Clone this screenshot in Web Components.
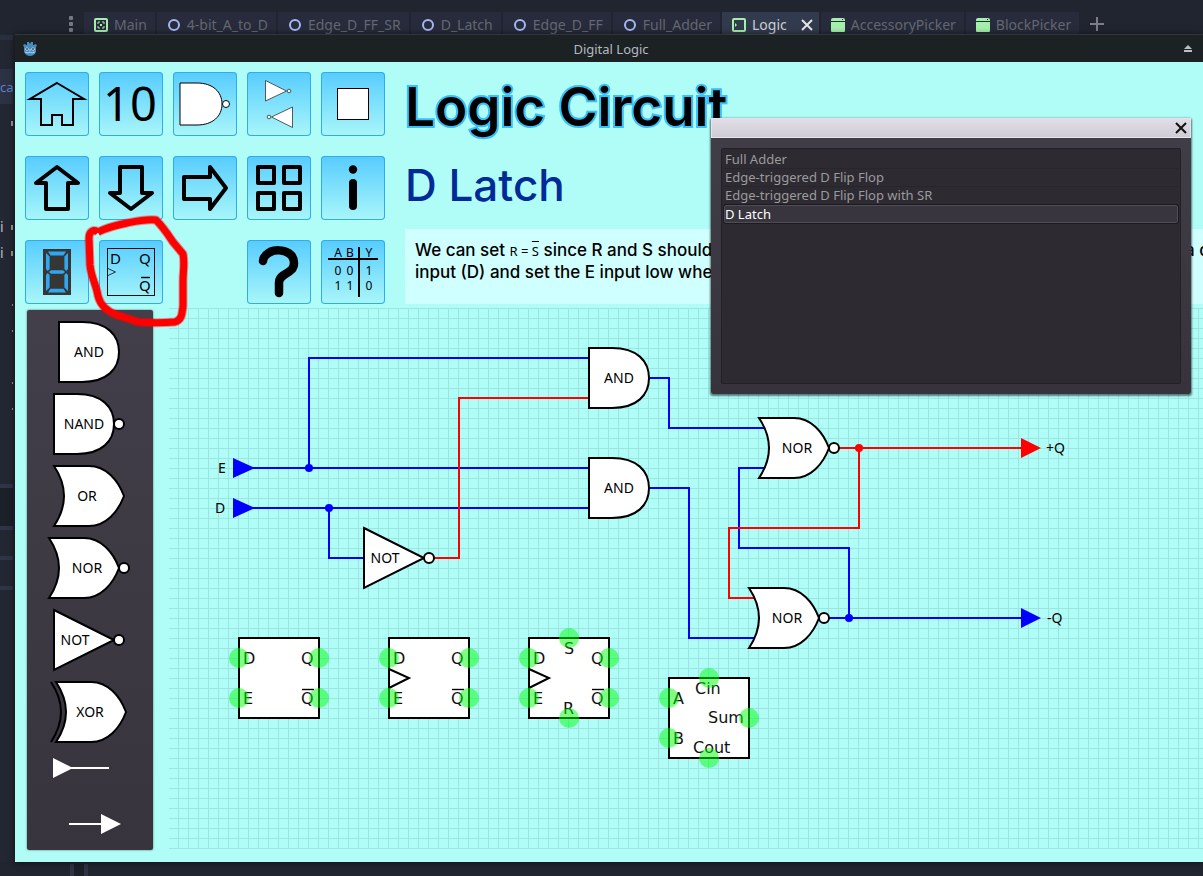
<!DOCTYPE html>
<html lang="en">
<head>
<meta charset="utf-8">
<title>Digital Logic</title>
<style>
  html, body { margin: 0; }
  body { font-family: "Noto Sans", sans-serif; font-size: 14px; background: #212530; overflow: hidden; }
</style>
</head>
<body>
<editor-desktop>
  <editor-tabs slot="tabs">
    <editor-tab kind="grid">Main</editor-tab>
    <editor-tab kind="ring">4-bit_A_to_D</editor-tab>
    <editor-tab kind="ring">Edge_D_FF_SR</editor-tab>
    <editor-tab kind="ring">D_Latch</editor-tab>
    <editor-tab kind="ring">Edge_D_FF</editor-tab>
    <editor-tab kind="ring">Full_Adder</editor-tab>
    <editor-tab kind="panel" active>Logic</editor-tab>
    <editor-tab kind="popup">AccessoryPicker</editor-tab>
    <editor-tab kind="popup">BlockPicker</editor-tab>
  </editor-tabs>
  <editor-sidebar slot="side"></editor-sidebar>
  <app-window slot="window" caption="Digital Logic">
    <tool-bar slot="tools"></tool-bar>
    <circuit-info slot="info"></circuit-info>
    <gate-palette slot="palette"></gate-palette>
    <circuit-canvas slot="canvas"></circuit-canvas>
    <block-dialog slot="dialog"></block-dialog>
  </app-window>
</editor-desktop>

<script>
const define = (name, render) => customElements.define(name, class extends HTMLElement {
  connectedCallback() {
    if (this.shadowRoot) return;
    this.attachShadow({ mode: 'open' }).innerHTML = render(this);
  }
});

define('editor-desktop', () => `
  <style>
    :host { display: grid; grid-template-columns: 15px 1fr; grid-template-rows: 35px 1fr 14px; min-height: 100vh; background: #232733; }
    .tabs { grid-column: 1 / -1; min-width: 0; background: #212530; }
    .side, .main { min-width: 0; }
    .main { z-index: 1; display: grid; box-shadow: 0 0 7px rgba(0,0,0,.65); }
    .foot { grid-column: 1 / -1; display: flex; justify-content: flex-start; padding: 2px 0 0 70px; background: #212530; }
    .split { width: 10px; border: solid #2f3546; border-width: 0 4px; background: #1c2029; }
  </style>
  <div class="tabs"><slot name="tabs"></slot></div>
  <div class="side"><slot name="side"></slot></div>
  <div class="main"><slot name="window"></slot></div>
  <div class="foot"><div class="split"></div></div>`);

define('editor-tabs', () => `
  <style>
    :host { display: flex; align-items: flex-start; gap: 2px; padding: 12px 0 0 60px; }
    button { border: 0; background: none; padding: 0; height: 23px; }
    .menu { width: 22px; }
    .add { width: 32px; }
    svg { display: block; margin: 0 auto; }
  </style>
  <button class="menu" aria-label="Tab list"><svg width="4" height="18" fill="#757982"><rect y="1" width="4" height="4" rx="1"/><rect y="7" width="4" height="4" rx="1"/><rect y="13" width="4" height="4" rx="1"/></svg></button>
  <slot></slot>
  <button class="add" aria-label="New tab"><svg width="14" height="14" stroke="#7b7e86" stroke-width="2"><path d="M7 0V14M0 7H14"/></svg></button>`);

const tabIcons = {
  grid: '<rect x="1" y="1" width="12" height="12" rx="1" fill="none" stroke="#a5efac" stroke-width="2"/><path d="M4 6V4H6M8 4H10V6M10 8V10H8M6 10H4V8" fill="none" stroke="#a5efac"/><rect x="6" y="6" width="2" height="2" fill="#a5efac"/>',
  ring: '<circle cx="7" cy="7" r="5" fill="none" stroke="#a5b7f3" stroke-width="2"/>',
  panel: '<rect x="1" y="1" width="12" height="12" rx="1" fill="none" stroke="#a5efac" stroke-width="2"/><path d="M3 5L5 7L3 9Z" fill="#a5efac"/>',
  popup: '<path d="M0 2Q0 0 2 0H12Q14 0 14 2V3H0ZM0 4H14V13Q14 14 13 14H1Q0 14 0 13Z" fill="#a5efac"/><rect x="11" y="1" width="1" height="1" fill="#212530"/>'
};
define('editor-tab', el => `
  <style>
    :host { display: block; flex: none; }
    .tab { display: flex; align-items: center; height: 23px; padding: 2px 8px 0 10px; box-sizing: border-box; background: #272b3b; }
    :host([active]) .tab { background: #323a4d; padding-right: 6px; }
    button { display: flex; align-items: center; gap: 6px; border: 0; padding: 0; background: none; font: 14px/20px "Noto Sans", sans-serif; color: #646772; white-space: nowrap; }
    :host([active]) button { color: #cdd0d6; }
    :host([active]) .close { margin-left: 14px; }
  </style>
  <div class="tab"><button><svg width="14" height="14">${tabIcons[el.getAttribute('kind')]}</svg><span><slot></slot></span></button>
  ${el.hasAttribute('active') ? '<button class="close" aria-label="Close tab"><svg width="12" height="12" stroke="#e3e5e9" stroke-width="2"><path d="M1 1L11 11M11 1L1 11"/></svg></button>' : ''}</div>`);

define('editor-sidebar', () => {
  const rows = ['m', '', '', '', 'im', 'im', '', 's', 's', '', 's', 's'];
  return `
  <style>
    :host { display: flex; flex-direction: column; width: 13px; background: #232733; }
    .head { height: 34px; border-top: 5px solid #2a2f3f; box-sizing: border-box; }
    .sel { height: 35px; background: #2c3244; color: #5c82c6; font-size: 13px; line-height: 36px; }
    .gap { height: 6px; }
    .row { height: 26px; display: flex; justify-content: space-between; align-items: center; color: #b9babd; line-height: 26px; }
    .row i { font-style: normal; }
    .row b { margin-left: auto; width: 2px; height: 5px; background: #9a9b9f; }
    .row b.s { height: 2px; width: 1px; }
    .band { border-top: 4px solid #2f3546; }
  </style>
  <div class="head"></div><div class="sel">ca</div><div class="gap"></div>
  ${rows.map(r => `<div class="row">${r[0] === 'i' ? '<i>i</i>' : ''}${r ? `<b class="${r === 's' ? 's' : ''}"></b>` : ''}</div>`).join('')}
  <div style="height:62px"></div>
  <div class="band" style="height:38px;background:#1c2029"></div>
  <div class="band" style="height:26px"></div>
  <div class="band" style="height:26px"></div>
  <div class="band"></div>`;
});

define('app-window', el => `
  <style>
    :host { display: flex; flex-direction: column; position: relative; min-width: 0; background: #b0fdf8; }
    header { display: flex; align-items: center; height: 27px; padding: 0 11px 0 7px; box-sizing: border-box; background: #1c2224; color: #b4b9c0; box-shadow: 0 -1px #333638; }
    header h1 { flex: 1; margin: 0; text-align: center; font: 13px/26px "Noto Sans", sans-serif; }
    header button { border: 0; padding: 0; background: none; line-height: 0; }
    .top { display: flex; gap: 20px; padding: 10px 0 0 10px; }
    .info { flex: 1; min-width: 0; display: grid; }
    .work { flex: 1; display: flex; gap: 16px; padding: 4px 0 12px 12px; align-items: flex-start; }
    .palette { padding-top: 2px; flex: none; }
    .canvas { flex: 1; min-width: 0; }
    .dialog { position: absolute; right: 12px; top: 83px; z-index: 3; }
  </style>
  <header>
    <svg width="16" height="16"><path d="M1 4L3 3L4 4L5 4L5 1L7 1L8 3L9 1L11 1L11 4L12 4L13 3L15 4L14 6V11Q12 15 8 15Q4 15 2 11V6Z" fill="#478cbf"/><circle cx="5" cy="8" r="1.6" fill="#fff"/><circle cx="11" cy="8" r="1.6" fill="#fff"/><circle cx="5" cy="8" r="1" fill="#414042"/><circle cx="11" cy="8" r="1" fill="#414042"/><path d="M8 8V10M3 11L6 12L8 11L10 12L13 11" fill="none" stroke="#b5d1e6"/></svg>
    <h1>${el.getAttribute('caption')}</h1>
    <button aria-label="Shade window"><svg width="8" height="8" fill="#b9c0c5"><path d="M4 0L8 4H0ZM0 5H8V7H0Z"/></svg></button>
  </header>
  <div class="top"><slot name="tools"></slot><div class="info"><slot name="info"></slot></div></div>
  <div class="work"><div class="palette"><slot name="palette"></slot></div><div class="canvas"><slot name="canvas"></slot></div></div>
  <div class="dialog"><slot name="dialog"></slot></div>`);

const arrow = turn => `<path transform="rotate(${turn} 32 32)" d="M32 11L53 27H43V53H21V27H11Z" fill="none" stroke="#000" stroke-width="4" stroke-linejoin="round"/>`;
const tools = [
  ['Home', '<path d="M32 11L59 27H48V53H37V43H27V53H16V27H5Z" fill="none" stroke="#000" stroke-width="2"/>'],
  ['Numbers', '<text x="31" y="49" font-size="47" text-anchor="middle">10</text>'],
  ['Gates', '<path d="M7 11H24C40 11 49 20 49 32S40 53 24 53H7Z" fill="#fff" stroke="#000"/><circle cx="53" cy="32" r="3.5" fill="#fff" stroke="#000"/>'],
  ['Inverters', '<g fill="#fff" stroke="#333" stroke-width=".8"><path d="M18.5 8.5V29L39.5 19ZM45.5 35V55.5L24.5 45Z"/><circle cx="42" cy="19" r="1.8"/><circle cx="22" cy="45" r="1.8"/></g>'],
  ['Block', '<rect x="16.5" y="16.5" width="31" height="31" fill="#fff" stroke="#000"/>'],
  ['Up', arrow(0)], ['Down', arrow(180)], ['Next', arrow(90)],
  ['Overview', '<g fill="none" stroke="#000" stroke-width="4" stroke-linejoin="round"><rect x="11" y="11" width="16" height="16"/><rect x="37" y="11" width="16" height="16"/><rect x="11" y="37" width="16" height="16"/><rect x="37" y="37" width="16" height="16"/></g>'],
  ['Information', '<circle cx="32" cy="13.5" r="4.2"/><path d="M32 27V50" stroke="#000" stroke-width="8" stroke-linecap="round"/>'],
  ['Seven segment display', '<rect x="18" y="9" width="28" height="46" fill="#363636"/><g fill="#30a8f0"><path d="M23 11.5H41L38.5 15.5H25.5ZM24 32L26 30.3H38L40 32L38 33.8H26ZM25.5 48.8H38.5L41 52.5H23ZM21 13L24.6 16.5V29L22.8 31L21 29ZM43 13L39.4 16.5V29L41.2 31L43 29ZM21 51L24.6 47.5V35L22.8 33L21 35ZM43 51L39.4 47.5V35L41.2 33L43 35Z"/></g>'],
  ['Flip flop blocks', '<rect x="8.5" y="8.5" width="47" height="47" fill="none" stroke="#111"/><g font-size="15"><text x="11" y="24">D</text><text x="40" y="24">Q</text><text x="40" y="51">Q</text></g><path d="M42 37.5H51" stroke="#000" stroke-width="1.4"/><path d="M9 28.5L16.5 32L9 35.5" fill="none" stroke="#222" stroke-width=".9"/>'],
  null,
  ['Help', '<path d="M16 21C17 7 47 6 47 23C47 35 32 32 32 43V53" fill="none" stroke="#000" stroke-width="8.5" stroke-linecap="round"/>'],
  ['Truth table', '<path d="M7 19H57M38 7V57" stroke="#000" stroke-width="2"/><g font-size="12" text-anchor="middle"><text x="17" y="17">A</text><text x="29" y="17">B</text><text x="48" y="17">Y</text><text x="17" y="35">0</text><text x="29" y="35">0</text><text x="48" y="35">1</text><text x="17" y="50">1</text><text x="29" y="50">1</text><text x="48" y="50">0</text></g>']
];
const ring = 'M18 21C28 16 37 14 47 12S66 8 76 9C84 17 89 25 93 31L103 43C105 52 103 60 103 70V95C102 105 101 109 95 111C83 112 70 112 58 111L37 104C26 100 20 93 18 85C16 73 11 66 10 54L9 27C9 20 14 18 18 21';
define('tool-bar', () => `
  <style>
    :host { position: relative; display: grid; flex: none; grid-template-columns: repeat(5, 64px); gap: 20px 10px; align-content: start; }
    button { display: block; width: 64px; height: 64px; padding: 0; border: 0; border-radius: 4px; line-height: 0; background: linear-gradient(#57ccff, #a9f7f9); box-shadow: inset 0 0 0 1px #2fabf0; }
    svg text { font-family: "Noto Sans", sans-serif; }
    .mark { position: absolute; left: 55px; top: 139px; z-index: 2; pointer-events: none; }
  </style>
  ${tools.map(t => t ? `<button aria-label="${t[0]}"><svg width="64" height="64">${t[1]}</svg></button>` : '<span></span>').join('')}
  <svg class="mark" width="114" height="122" fill="none" stroke="#f00" stroke-linejoin="round"><path d="${ring}" stroke-opacity=".4" stroke-width="9"/><path d="${ring}" stroke-width="7"/></svg>`);

define('circuit-info', () => `
  <style>
    :host { display: flex; flex-direction: column; min-width: 0; font-family: Inter, sans-serif; color: #000; }
    h2, h3, p { margin: 0; white-space: nowrap; }
    h2 { font-size: 53px; line-height: 70px; font-weight: 600; -webkit-text-stroke: 4px #38c0fa; paint-order: stroke fill; }
    h3 { margin-top: 10px; font-size: 44px; line-height: 66px; font-weight: 500; color: #002b96; }
    .box { flex: 1; margin-top: 11px; padding: 10px 0 10px 10px; background: #d0ffff; font-size: 17px; font-weight: 500; line-height: 22px; overflow: hidden; }
    p { display: flex; justify-content: space-between; }
    .tail { margin-right: -6px; }
    .f { font: 13px/20px "Noto Sans", sans-serif; }
    .f span { text-decoration: overline; }
  </style>
  <h2>Logic Circuit</h2>
  <h3>D Latch</h3>
  <div class="box">
    <p><span>We can set <span class="f">R = <span>S</span></span> since R and S should</span><span class="tail">a c</span></p>
    <p><span>input (D) and set the E input low whe</span></p>
  </div>`);

const andBody = '<path d="M0 0H23C48 0 60 13 60 30S48 60 23 60H0Z"/>';
const orBody = '<path d="M0 0H35C52 0 64 14 70 30C64 46 52 60 35 60H0Q20 30 0 0Z"/>';
const gates = {
  AND:  { w: 60, t: 30, body: andBody },
  NAND: { w: 70, t: 30, body: andBody, dot: 65 },
  OR:   { w: 70, t: 33, body: orBody },
  NOR:  { w: 80, t: 38, body: orBody, dot: 75 },
  NOT:  { w: 70, t: 21, body: '<path d="M0 0L60 30L0 60Z"/>', dot: 65 },
  XOR:  { w: 76, t: 39, body: `<g transform="translate(5)">${orBody}</g><path d="M0 0Q20 30 0 60" fill="none"/>` }
};
define('logic-gate', el => {
  const type = el.getAttribute('type'), g = gates[type];
  return `
  <style>
    :host { display: block; line-height: 0; }
    svg { overflow: visible; }
    text { font: 14px "Noto Sans", sans-serif; text-anchor: middle; }
  </style>
  <svg width="${g.w}" height="60"><g fill="#fff" stroke="#000" stroke-width="2">${g.body}${g.dot ? `<circle cx="${g.dot}" cy="30" r="5"/>` : ''}</g><text x="${g.t}" y="35">${type}</text></svg>`;
});

define('gate-palette', () => `
  <style>
    :host { display: flex; flex-direction: column; align-items: center; gap: 12px; width: 126px; box-sizing: border-box; padding: 12px 2px 11px 0; border-radius: 2px; background: linear-gradient(#433f4a, #38343d); box-shadow: 0 0 2px rgba(40,60,60,.8); }
    button { display: block; border: 0; padding: 0; background: none; line-height: 0; }
    .last { margin-top: 14px; }
    .first { margin-top: -1px; }
  </style>
  ${Object.keys(gates).map(t => `<button aria-label="${t} gate"><logic-gate type="${t}"></logic-gate></button>`).join('')}
  <button class="first" aria-label="Input"><svg width="72" height="30"><path d="M0 5L20 15L0 25Z" fill="#fff"/><path d="M18 15H56" stroke="#fff" stroke-width="2"/></svg></button>
  <button class="last" aria-label="Output"><svg width="64" height="30"><path d="M44 5L64 15L44 25Z" fill="#fff"/><path d="M12 15H46" stroke="#fff" stroke-width="2"/></svg></button>`);

const chips = {
  latch: { labels: [['D', 4, 26], ['E', 4, 66], ['Q', 62, 26], ['Q', 62, 66]], pins: [[0, 20], [0, 60], [80, 20], [80, 60]], bar: true },
  edge: { labels: [['D', 4, 26], ['E', 4, 66], ['Q', 62, 26], ['Q', 62, 66]], pins: [[0, 20], [0, 60], [80, 20], [80, 60]], bar: true, clock: true },
  edgesr: { labels: [['D', 4, 26], ['E', 4, 66], ['Q', 62, 26], ['Q', 62, 66], ['S', 35, 16], ['R', 34, 76]], pins: [[0, 20], [0, 60], [80, 20], [80, 60], [40, 0], [40, 80]], bar: true, clock: true },
  adder: { labels: [['A', 4, 26], ['B', 4, 66], ['Cin', 26, 16], ['Sum', 39, 45], ['Cout', 24, 75]], pins: [[0, 20], [0, 60], [40, 0], [80, 40], [40, 80]] }
};
define('logic-chip', el => {
  const c = chips[el.getAttribute('type')];
  return `
  <style>
    :host { display: block; line-height: 0; }
    svg { overflow: visible; }
    text { font: 16px "DejaVu Sans", sans-serif; fill: #111; }
  </style>
  <svg width="80" height="80"><rect width="80" height="80" fill="#fff" stroke="#000" stroke-width="2"/>
  ${c.clock ? '<path d="M0 31L20 40L0 50" fill="none" stroke="#000" stroke-width="2"/>' : ''}
  ${c.bar ? '<path d="M63 51.5H75" stroke="#000" stroke-width="1.4"/>' : ''}
  ${c.labels.map(([s, x, y]) => `<text x="${x}" y="${y}">${s}</text>`).join('')}
  <g fill="rgb(0,255,10)" fill-opacity=".5">${c.pins.map(([x, y]) => `<circle cx="${x}" cy="${y}" r="10"/>`).join('')}</g></svg>`;
});

const nodes = [
  ['logic-gate', 'AND', 420, 40], ['logic-gate', 'AND', 420, 150], ['logic-gate', 'NOT', 195, 220],
  ['logic-gate', 'NOR', 590, 110], ['logic-gate', 'NOR', 580, 280],
  ['logic-chip', 'latch', 70, 330], ['logic-chip', 'edge', 220, 330], ['logic-chip', 'edgesr', 360, 330], ['logic-chip', 'adder', 500, 370]
];
define('circuit-canvas', () => `
  <style>
    :host { display: block; position: relative; overflow: hidden; }
    .wires { display: block; width: 100%; height: 541px; }
    .wires text { font: 14px "Noto Sans", sans-serif; }
    .node { position: absolute; }
  </style>
  <svg class="wires">
    <defs><pattern id="grid" width="10" height="10" patternUnits="userSpaceOnUse"><path d="M0 .5H10M9.5 0V10" stroke="#9be6e1"/></pattern></defs>
    <rect width="100%" height="100%" fill="url(#grid)"/>
    <g fill="none" stroke="#00f" stroke-width="2">
      <path d="M80 160H420M140 160V50H420M80 200H420M160 200V250H195M480 70H500V120H597M480 180H520V330H587M660 310H854M680 310V240H570V160H597"/>
      <path stroke="#f00" d="M265 250H290V90H420M670 140H854M690 140V220H560V290H587"/>
    </g>
    <g fill="#00f"><path d="M64 150L86 160L64 170ZM64 190L86 200L64 210ZM852 300L872 310L852 320Z"/><circle cx="140" cy="160" r="4"/><circle cx="160" cy="200" r="4"/><circle cx="680" cy="310" r="4"/></g>
    <g fill="#f00"><path d="M852 130L872 140L852 150Z"/><circle cx="690" cy="140" r="4"/></g>
    <text x="49" y="165">E</text><text x="46" y="205">D</text><text x="877" y="145">+Q</text><text x="878" y="315">-Q</text>
  </svg>
  ${nodes.map(([tag, type, x, y]) => `<${tag} class="node" type="${type}" style="left:${x}px;top:${y}px"></${tag}>`).join('')}`);

define('block-dialog', () => `
  <style>
    :host { display: block; width: 480px; }
    section { border-radius: 2px; background: linear-gradient(#413e48, #36333c); box-shadow: 0 1px 2px 1px rgba(20,40,40,.6); }
    header { display: flex; justify-content: flex-end; align-items: center; height: 20px; box-sizing: border-box; padding-right: 3px; border: 1px solid #e6e3ec; background: linear-gradient(#e0dde6, #cfccd6); }
    header button { border: 0; padding: 0; background: none; line-height: 0; }
    .body { padding: 10px; }
    ul { list-style: none; margin: 0; height: 236px; box-sizing: border-box; padding: 2px; border: 1px solid #232127; border-radius: 2px; background: #2d2a32; }
    li button { display: block; width: 100%; height: 18px; box-sizing: border-box; border: 0; border-bottom: 1px solid #28262d; padding: 0 1px; background: none; text-align: left; font: 13px/17px "Noto Sans", sans-serif; color: #9b9a9d; }
    li button[aria-selected=true] { color: #fff; background: #38353f; border: 1px solid #504e55; border-radius: 2px; padding: 0; line-height: 15px; outline: 1px solid #1c1a20; }
  </style>
  <section role="dialog" aria-label="Blocks">
    <header><button aria-label="Close"><svg width="12" height="12" stroke="#111" stroke-width="2"><path d="M1 1L11 11M11 1L1 11"/></svg></button></header>
    <div class="body"><ul>
      <li><button>Full Adder</button></li>
      <li><button>Edge-triggered D Flip Flop</button></li>
      <li><button>Edge-triggered D Flip Flop with SR</button></li>
      <li><button aria-selected="true">D Latch</button></li>
    </ul></div>
  </section>`);
</script>
</body>
</html>
